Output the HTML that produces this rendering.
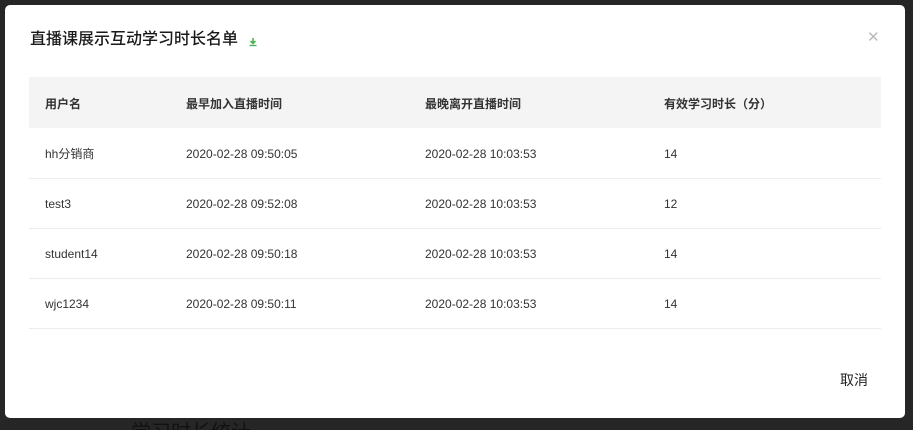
<!DOCTYPE html>
<html style="width:913px;height:430px;overflow:hidden"><head><meta charset="utf-8"><style>
*{margin:0;padding:0;box-sizing:border-box}
body{width:913px;height:430px;background:#262626;position:relative;overflow:hidden;font-family:"Liberation Sans","Noto Sans CJK SC",sans-serif;color:#333}
.bg{position:absolute;left:131px;top:421px;font-size:20px;line-height:24px;color:#111}
.modal{position:absolute;left:5px;top:5px;width:900px;height:413px;background:#fff;border-radius:5px}
.title{position:absolute;left:25px;top:25px;font-size:16px;line-height:20px;color:#1a1a1a;font-weight:500}
.dl{position:absolute;left:243px;top:32px}
.close{position:absolute;left:862px;top:25px;font-size:15px;color:#bbb;line-height:1}
table{position:absolute;left:24px;top:72px;width:852px;border-collapse:collapse;font-size:12px}
th{background:#f4f4f4;height:51px;text-align:left;font-weight:bold;color:#333;padding-left:16px;padding-top:2px}
td{height:50px;border-bottom:1px solid #ececec;padding-left:16px;padding-top:2px;color:#333}
.cancel{position:absolute;left:835px;top:365px;font-size:14px;color:#222}
</style></head><body>
<div class="bg">学习时长统计</div>
<div class="modal">
<div class="title">直播课展示互动学习时长名单</div>
<svg class="dl" width="10" height="10" viewBox="0 0 10 10"><path d="M5 1v5M2.5 4l2.5 2.5L7.5 4" stroke="#52b35a" stroke-width="1.6" fill="none"/><path d="M1.5 8.5h7" stroke="#52b35a" stroke-width="1.4"/></svg>
<div class="close">✕</div>
<table>
<colgroup><col style="width:141px"><col style="width:239px"><col style="width:239px"><col></colgroup>
<tr><th>用户名</th><th>最早加入直播时间</th><th>最晚离开直播时间</th><th>有效学习时长（分）</th></tr>
<tr><td>hh分销商</td><td>2020-02-28 09:50:05</td><td>2020-02-28 10:03:53</td><td>14</td></tr>
<tr><td>test3</td><td>2020-02-28 09:52:08</td><td>2020-02-28 10:03:53</td><td>12</td></tr>
<tr><td>student14</td><td>2020-02-28 09:50:18</td><td>2020-02-28 10:03:53</td><td>14</td></tr>
<tr><td>wjc1234</td><td>2020-02-28 09:50:11</td><td>2020-02-28 10:03:53</td><td>14</td></tr>
</table>
<div class="cancel">取消</div>
</div>
</body></html>
